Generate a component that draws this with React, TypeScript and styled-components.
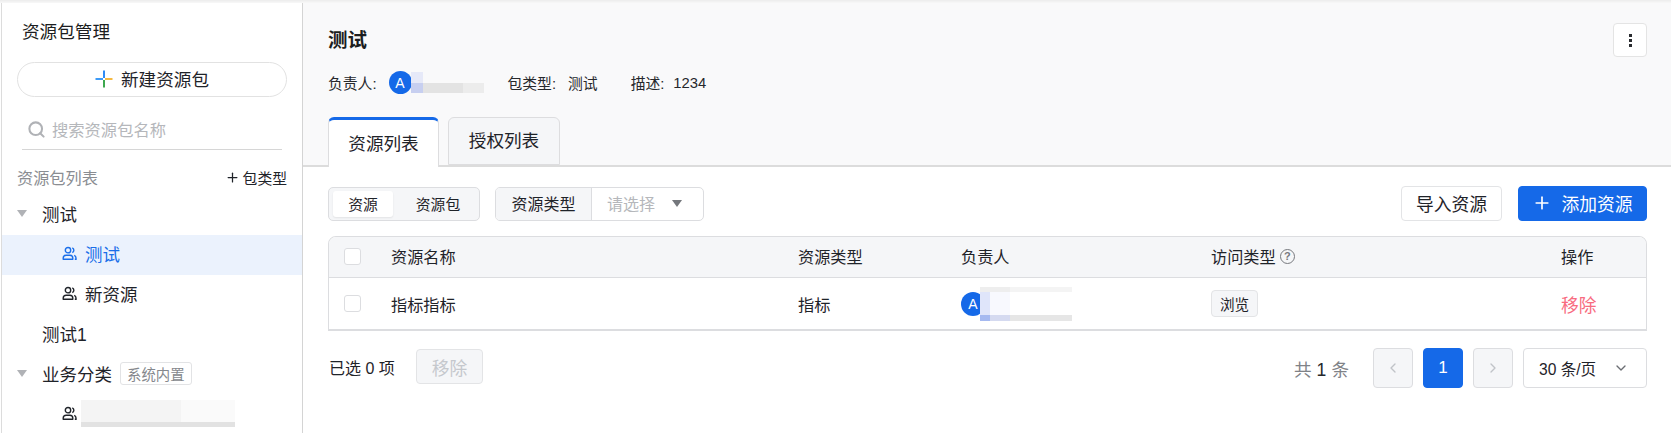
import styled, {createGlobalStyle} from "styled-components";
import {ChevronDown, ChevronLeft, ChevronRight, Plus, Search} from "lucide-react";

const GlobalStyle = createGlobalStyle`
    html, body {
        margin: 0;
        padding: 0;
        background: #fff;
        overflow: hidden;
    }
    * {
        box-sizing: border-box;
    }
`;

const Page = styled.div`
    width: 1671px;
    height: 433px;
    display: flex;
    flex-direction: column;
    overflow: hidden;
    color: #1f2329;
    font-family: "Liberation Sans", "Noto Sans CJK SC", sans-serif;
`;

const TopShade = styled.div`
    flex: none;
    height: 3px;
    background: linear-gradient(#ececec, #f8f8f8);
`;

const Body = styled.div`
    flex: 1;
    min-height: 0;
    display: flex;
    padding-left: 1px;
`;

const Sidebar = styled.aside`
    flex: none;
    width: 302px;
    border-left: 1px solid #dcdcdc;
    border-right: 1px solid #d4d4d4;
    display: flex;
    flex-direction: column;
    overflow: hidden;
`;

const SideTitle = styled.h2`
    margin: 16px 0 0 20px;
    height: 26px;
    line-height: 26px;
    font-size: 17.6px;
    font-weight: 400;
    color: #1b1d20;
`;

const NewButton = styled.button`
    margin: 17px 0 0 15px;
    width: 270px;
    height: 35px;
    flex: none;
    display: flex;
    align-items: center;
    justify-content: center;
    gap: 8px;
    border: 1px solid #e2e2e2;
    border-radius: 18px;
    background: #fff;
    font: inherit;
    font-size: 17.6px;
    color: #1f2329;
    padding: 0 0 2px 0;
`;

const SearchBar = styled.div`
    margin: 12px 0 0 20px;
    width: 260px;
    height: 41px;
    flex: none;
    display: flex;
    align-items: center;
    gap: 6px;
    padding: 0 0 0 5px;
    border-bottom: 1px solid #d6d6d6;
    font-size: 16.3px;
    color: #b5b7bb;
`;

const ListHead = styled.div`
    margin: 15px 15px 6px 15px;
    height: 24px;
    flex: none;
    display: flex;
    align-items: center;
    justify-content: space-between;
    font-size: 16.2px;
    color: #8a8d92;
`;

const AddType = styled.span`
    display: flex;
    align-items: center;
    gap: 3px;
    font-size: 14.8px;
    color: #1f2329;
`;

const TreeRow = styled.div<{$level?: number; $active?: boolean}>`
    height: 40px;
    flex: none;
    display: flex;
    align-items: center;
    gap: 8px;
    padding-left: ${(p) => (p.$level ? 60 : 15)}px;
    padding-bottom: 3px;
    font-size: 17.5px;
    background: ${(p) => (p.$active ? "#ebf2fd" : "transparent")};
    color: ${(p) => (p.$active ? "#1a6ee9" : "#1f2329")};
`;

const Caret = styled.span`
    width: 0;
    height: 0;
    flex: none;
    border-left: 5px solid transparent;
    border-right: 5px solid transparent;
    border-top: 7px solid #b0b2b6;
`;

const TreeCaret = styled(Caret)`
    margin-right: 7px;
`;

const CaretSpacer = styled.span`
    width: 17px;
    flex: none;
`;

const SystemTag = styled.span`
    height: 23px;
    display: flex;
    align-items: center;
    padding: 0 6px;
    border: 1px solid #e2e3e5;
    border-radius: 3px;
    font-size: 14.4px;
    color: #85888d;
`;

const Redacted = styled.span<{$kind: "meta" | "row" | "side"}>`
    display: block;
    flex: none;
    ${(p) => p.$kind === "meta" && `
        width: 73px;
        height: 21px;
        margin-left: -1px;
        background:
            linear-gradient(90deg, #c7cff0 0 12px, #e3e3e3 12px 52px, #ececec 52px) 0 100% / 100% 10px no-repeat,
            linear-gradient(90deg, #e6e9f8 0 12px, #f9f9fa 12px) 0 0 / 100% 11px no-repeat;
    `}
    ${(p) => p.$kind === "row" && `
        width: 92px;
        height: 34px;
        margin-left: -5px;
        background:
            linear-gradient(90deg, #a5b9f0 0 10px, #d5daf0 10px 30px, #e6e6e6 30px) 0 100% / 100% 6px no-repeat,
            linear-gradient(90deg, #eeeeee 0 30px, #f4f4f4 30px) 0 0 / 100% 5px no-repeat,
            linear-gradient(90deg, #dfe5fa 0 10px, #f8f9fe 10px 30px, #ffffff 30px);
    `}
    ${(p) => p.$kind === "side" && `
        width: 154px;
        height: 27px;
        margin-left: -4px;
        background:
            linear-gradient(#e2e2e2, #e2e2e2) 0 100% / 100% 5px no-repeat,
            linear-gradient(90deg, #f4f4f4 0 100px, #fafafa 100px);
    `}
`;

const Main = styled.main`
    flex: 1;
    min-width: 0;
    display: flex;
    flex-direction: column;
`;

const Header = styled.header`
    flex: none;
    height: 164px;
    background: #f9f9fa;
    border-bottom: 2px solid #dcdcdc;
    padding: 0 24px 0 25px;
    display: flex;
    flex-direction: column;
`;

const TitleRow = styled.div`
    height: 54px;
    padding-top: 20px;
    display: flex;
    justify-content: space-between;
    align-items: flex-start;
`;

const Title = styled.h1`
    margin: 3px 0 0;
    font-size: 19.5px;
    line-height: 28px;
    font-weight: 700;
    color: #1b1d20;
`;

const MoreButton = styled.button`
    width: 34px;
    height: 34px;
    padding: 0;
    border: 1px solid #e4e4e4;
    border-radius: 4px;
    background: #fff;
    display: flex;
    flex-direction: column;
    align-items: center;
    justify-content: center;
    gap: 2px;
`;

const Dot = styled.i`
    width: 3px;
    height: 3px;
    background: #2a2c30;
`;

const MetaRow = styled.div`
    height: 24px;
    margin-top: 14px;
    display: flex;
    align-items: center;
    font-size: 14.8px;
    color: #26282c;
`;

const MetaItem = styled.div<{$gap: number}>`
    display: flex;
    align-items: center;
    margin-right: ${(p) => p.$gap}px;
`;

const MetaLabel = styled.span<{$tight?: boolean}>`
    margin-right: ${(p) => (p.$tight ? 9 : 12)}px;
`;

const Avatar = styled.span<{$small?: boolean}>`
    width: ${(p) => (p.$small ? 24 : 23)}px;
    height: ${(p) => (p.$small ? 24 : 23)}px;
    flex: none;
    border-radius: 50%;
    background: #1569e8;
    color: #fff;
    display: flex;
    align-items: center;
    justify-content: center;
    font-size: 14px;
`;

const Tabs = styled.div`
    margin-top: 23px;
    display: flex;
    gap: 9px;
    height: 48px;
`;

const Tab = styled.div<{$active?: boolean}>`
    width: ${(p) => (p.$active ? 111 : 112)}px;
    height: ${(p) => (p.$active ? 50 : 48)}px;
    display: flex;
    align-items: center;
    justify-content: center;
    padding-bottom: ${(p) => (p.$active ? 3 : 4)}px;
    font-size: 17.6px;
    border: 1px solid #dddddf;
    border-top: ${(p) => (p.$active ? "3px solid #1569e8" : "1px solid #dddddf")};
    border-bottom: ${(p) => (p.$active ? "none" : "1px solid #dddddf")};
    border-radius: 6px 6px 0 0;
    background: ${(p) => (p.$active ? "#fff" : "#f5f6f8")};
    position: relative;
    z-index: 1;
`;

const Content = styled.section`
    flex: 1;
    min-height: 0;
    padding: 19px 24px 0 25px;
    display: flex;
    flex-direction: column;
`;

const Toolbar = styled.div`
    height: 35px;
    display: flex;
    align-items: center;
`;

const Segment = styled.div`
    width: 152px;
    height: 34px;
    padding: 3px 4px;
    display: flex;
    background: #f5f6f8;
    border: 1px solid #dcdde0;
    border-radius: 5px;
    font-size: 14.8px;
`;

const SegmentItem = styled.span<{$active?: boolean}>`
    flex: ${(p) => (p.$active ? "none" : "1")};
    width: ${(p) => (p.$active ? "60px" : "auto")};
    padding: ${(p) => (p.$active ? "0 0 1px" : "0 0 1px 8px")};
    display: flex;
    align-items: center;
    justify-content: center;
    border-radius: 3px;
    background: ${(p) => (p.$active ? "#fff" : "transparent")};
    box-shadow: ${(p) => (p.$active ? "0 1px 2px rgba(0,0,0,0.08)" : "none")};
`;

const SelectBox = styled.div`
    margin-left: 15px;
    width: 209px;
    height: 34px;
    display: flex;
    border: 1px solid #dcdde0;
    border-radius: 5px;
    overflow: hidden;
    font-size: 16px;
`;

const SelectLabel = styled.span`
    width: 96px;
    padding-bottom: 1px;
    display: flex;
    align-items: center;
    justify-content: center;
    background: #f5f6f8;
    border-right: 1px solid #dcdde0;
`;

const SelectValue = styled.span`
    flex: 1;
    padding: 0 21px 1px 15px;
    display: flex;
    align-items: center;
    justify-content: space-between;
    color: #b5b7bb;
`;

const DarkCaret = styled(Caret)`
    border-top-color: #74777c;
`;

const Spacer = styled.div`
    flex: 1;
`;

const Button = styled.button<{$primary?: boolean}>`
    height: 35px;
    padding: 0 0 2px;
    display: flex;
    align-items: center;
    justify-content: center;
    gap: 9px;
    font: inherit;
    font-size: 17.8px;
    border-radius: 4px;
    border: 1px solid ${(p) => (p.$primary ? "#1569e8" : "#e3e4e6")};
    background: ${(p) => (p.$primary ? "#1569e8" : "#fff")};
    color: ${(p) => (p.$primary ? "#fff" : "#1f2329")};
    width: ${(p) => (p.$primary ? 129 : 101)}px;
    margin-left: ${(p) => (p.$primary ? 16 : 0)}px;
`;

const Table = styled.div`
    margin-top: 15px;
    height: 95px;
    border: 1px solid #dcdde0;
    border-bottom-width: 2px;
    border-radius: 8px 8px 0 0;
    overflow: hidden;
`;

const TableRow = styled.div<{$head?: boolean}>`
    display: grid;
    grid-template-columns: 62px 407px 163px 250px 350px 1fr;
    align-items: center;
    height: ${(p) => (p.$head ? 41 : 51)}px;
    padding-bottom: ${(p) => (p.$head ? 2 : 0)}px;
    background: ${(p) => (p.$head ? "#f5f6f8" : "#fff")};
    border-bottom: ${(p) => (p.$head ? "1px solid #dcdde0" : "none")};
    font-size: 16.2px;
`;

const Cell = styled.div`
    display: flex;
    align-items: center;
`;

const Checkbox = styled.span`
    display: block;
    width: 17px;
    height: 17px;
    margin-left: 15px;
    border: 1px solid #dcdde0;
    border-radius: 3px;
    background: #fff;
`;

const HelpMark = styled.span`
    width: 15px;
    height: 15px;
    margin-left: 4px;
    border: 1.5px solid #77797e;
    border-radius: 50%;
    color: #77797e;
    font-size: 11px;
    font-weight: 700;
    display: flex;
    align-items: center;
    justify-content: center;
`;

const AccessTag = styled.span`
    width: 47px;
    height: 27px;
    display: flex;
    align-items: center;
    justify-content: center;
    font-size: 14.6px;
    background: #f5f6f8;
    border: 1px solid #e3e4e6;
    border-radius: 4px;
`;

const Danger = styled.span`
    font-size: 17.8px;
    color: #f86b80;
`;

const Footer = styled.div`
    margin-top: 17px;
    height: 40px;
    display: flex;
    align-items: center;
`;

const Selected = styled.span`
    font-size: 16px;
    width: 88px;
    padding: 0 0 2px 1px;
`;

const DisabledButton = styled.button`
    width: 67px;
    height: 35px;
    padding: 0;
    margin-bottom: 3px;
    font: inherit;
    font-size: 17.8px;
    color: #c5c8cd;
    background: #f5f6f8;
    border: 1px solid #e3e4e6;
    border-radius: 4px;
`;

const Total = styled.span`
    margin-right: 24px;
    font-size: 17.6px;
    color: #7f8287;
`;

const TotalNumber = styled.span`
    color: #26282c;
    margin: 0 5px;
`;

const PageButton = styled.span<{$active?: boolean}>`
    width: 40px;
    height: 40px;
    margin-right: 10px;
    display: flex;
    align-items: center;
    justify-content: center;
    border-radius: 4px;
    border: 1px solid ${(p) => (p.$active ? "#1569e8" : "#dcdde0")};
    background: ${(p) => (p.$active ? "#1569e8" : "#f5f6f8")};
    color: ${(p) => (p.$active ? "#fff" : "#c0c3c8")};
    font-size: 17px;
`;

const PageSize = styled.div`
    width: 124px;
    height: 40px;
    display: flex;
    align-items: center;
    justify-content: space-between;
    padding: 0 17px 0 15px;
    border: 1px solid #dcdde0;
    border-radius: 4px;
    font-size: 15.6px;
`;

function SparkPlus() {
    return (
        <svg width="18" height="18" viewBox="0 0 18 18">
            <path d="M9 0.5V8" stroke="#2f8bf5" strokeWidth="2" />
            <path d="M0.5 9H8" stroke="#3d9bf7" strokeWidth="2" />
            <path d="M10 9H17.5" stroke="#f5b942" strokeWidth="2" />
            <path d="M9 10V17.5" stroke="#3da84f" strokeWidth="2" />
        </svg>
    );
}

function GroupIcon() {
    return (
        <svg width="15" height="15" viewBox="0 0 15 15" fill="none" stroke="currentColor" strokeWidth="1.4">
            <circle cx="6" cy="4.2" r="2.7" />
            <path d="M1.2 13.3v-1.1c0-1.7 1.3-2.9 3-2.9h3.6c1.7 0 3 1.2 3 2.9v1.1z" strokeLinejoin="round" />
            <path d="M10.3 1.8a2.7 2.7 0 0 1 0 4.9" />
            <path d="M12.2 9.4c1 .4 1.8 1.4 1.8 2.7v1.2h-1.2" />
        </svg>
    );
}

export default function App() {
    return (
        <Page>
            <GlobalStyle />
            <TopShade />
            <Body>
                <Sidebar>
                    <SideTitle>资源包管理</SideTitle>
                    <NewButton><SparkPlus />新建资源包</NewButton>
                    <SearchBar><Search size={19} color="#b0b2b6" strokeWidth={2.6} />搜索资源包名称</SearchBar>
                    <ListHead>
                        资源包列表
                        <AddType><Plus size={15} color="#1f2329" strokeWidth={2} />包类型</AddType>
                    </ListHead>
                    <TreeRow><TreeCaret />测试</TreeRow>
                    <TreeRow $level={1} $active><GroupIcon />测试</TreeRow>
                    <TreeRow $level={1}><GroupIcon />新资源</TreeRow>
                    <TreeRow><CaretSpacer />测试1</TreeRow>
                    <TreeRow><TreeCaret />业务分类<SystemTag>系统内置</SystemTag></TreeRow>
                    <TreeRow $level={1}><GroupIcon /><Redacted $kind="side" /></TreeRow>
                </Sidebar>
                <Main>
                    <Header>
                        <TitleRow>
                            <Title>测试</Title>
                            <MoreButton><Dot /><Dot /><Dot /></MoreButton>
                        </TitleRow>
                        <MetaRow>
                            <MetaItem $gap={24}>
                                <MetaLabel>负责人:</MetaLabel>
                                <Avatar>A</Avatar>
                                <Redacted $kind="meta" />
                            </MetaItem>
                            <MetaItem $gap={33}><MetaLabel>包类型:</MetaLabel>测试</MetaItem>
                            <MetaItem $gap={0}><MetaLabel $tight>描述:</MetaLabel>1234</MetaItem>
                        </MetaRow>
                        <Tabs>
                            <Tab $active>资源列表</Tab>
                            <Tab>授权列表</Tab>
                        </Tabs>
                    </Header>
                    <Content>
                        <Toolbar>
                            <Segment>
                                <SegmentItem $active>资源</SegmentItem>
                                <SegmentItem>资源包</SegmentItem>
                            </Segment>
                            <SelectBox>
                                <SelectLabel>资源类型</SelectLabel>
                                <SelectValue>请选择<DarkCaret /></SelectValue>
                            </SelectBox>
                            <Spacer />
                            <Button>导入资源</Button>
                            <Button $primary><Plus size={20} strokeWidth={2} />添加资源</Button>
                        </Toolbar>
                        <Table>
                            <TableRow $head>
                                <Cell><Checkbox /></Cell>
                                <Cell>资源名称</Cell>
                                <Cell>资源类型</Cell>
                                <Cell>负责人</Cell>
                                <Cell>访问类型<HelpMark>?</HelpMark></Cell>
                                <Cell>操作</Cell>
                            </TableRow>
                            <TableRow>
                                <Cell><Checkbox /></Cell>
                                <Cell>指标指标</Cell>
                                <Cell>指标</Cell>
                                <Cell><Avatar $small>A</Avatar><Redacted $kind="row" /></Cell>
                                <Cell><AccessTag>浏览</AccessTag></Cell>
                                <Cell><Danger>移除</Danger></Cell>
                            </TableRow>
                        </Table>
                        <Footer>
                            <Selected>已选 0 项</Selected>
                            <DisabledButton>移除</DisabledButton>
                            <Spacer />
                            <Total>共<TotalNumber>1</TotalNumber>条</Total>
                            <PageButton><ChevronLeft size={16} /></PageButton>
                            <PageButton $active>1</PageButton>
                            <PageButton><ChevronRight size={16} /></PageButton>
                            <PageSize>30 条/页<ChevronDown size={16} color="#6b6e73" /></PageSize>
                        </Footer>
                    </Content>
                </Main>
            </Body>
        </Page>
    );
}
